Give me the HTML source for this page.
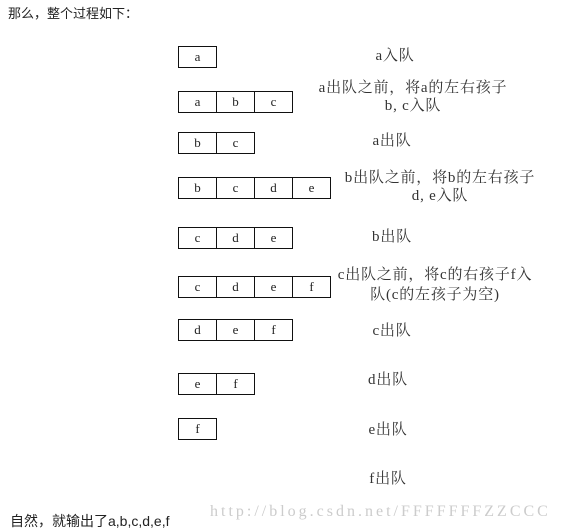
<!DOCTYPE html>
<html><head><meta charset="utf-8"><style>
body{margin:0;width:573px;height:531px;background:#fff;position:relative;overflow:hidden;font-family:"Liberation Serif","Noto Serif CJK SC",serif;color:#222}
.b{position:absolute;height:20px;border:1px solid #111;display:flex}
.b span{width:37px;border-right:1px solid #111;text-align:center;font-size:13px;line-height:20px}
.b span:last-child{border-right:none}
.t{position:absolute;font-size:15px;letter-spacing:0.8px;white-space:nowrap;transform:translateX(-50%);line-height:18px;color:#333}
.s{position:absolute;font-family:"Liberation Sans","Noto Sans CJK SC",sans-serif;font-size:13px;white-space:nowrap;color:#222}
</style></head><body>
<div class="s" style="left:8px;top:3px">那么，整个过程如下：</div>
<div class="b" style="left:178px;top:46px"><span>a</span></div>
<div class="b" style="left:178px;top:91px"><span>a</span><span>b</span><span>c</span></div>
<div class="b" style="left:178px;top:132px"><span>b</span><span>c</span></div>
<div class="b" style="left:178px;top:177px"><span>b</span><span>c</span><span>d</span><span>e</span></div>
<div class="b" style="left:178px;top:227px"><span>c</span><span>d</span><span>e</span></div>
<div class="b" style="left:178px;top:276px"><span>c</span><span>d</span><span>e</span><span>f</span></div>
<div class="b" style="left:178px;top:319px"><span>d</span><span>e</span><span>f</span></div>
<div class="b" style="left:178px;top:373px"><span>e</span><span>f</span></div>
<div class="b" style="left:178px;top:418px"><span>f</span></div>
<div class="t" style="left:395px;top:47px">a入队</div>
<div class="t" style="left:413px;top:79px">a出队之前，将a的左右孩子</div>
<div class="t" style="left:413px;top:97px">b, c入队</div>
<div class="t" style="left:392px;top:132px">a出队</div>
<div class="t" style="left:440px;top:169px">b出队之前，将b的左右孩子</div>
<div class="t" style="left:440px;top:187px">d, e入队</div>
<div class="t" style="left:392px;top:228px">b出队</div>
<div class="t" style="left:435px;top:266px">c出队之前，将c的右孩子f入</div>
<div class="t" style="left:435px;top:286px">队(c的左孩子为空)</div>
<div class="t" style="left:392px;top:322px">c出队</div>
<div class="t" style="left:388px;top:371px">d出队</div>
<div class="t" style="left:388px;top:421px">e出队</div>
<div class="t" style="left:388px;top:470px">f出队</div>
<div style="position:absolute;left:210px;top:503px;font-size:16px;color:#ccc;white-space:nowrap;letter-spacing:3px">http://blog.csdn.net/FFFFFFFZZCCC</div>
<div class="s" style="left:10px;top:511px;font-size:14px">自然，就输出了a,b,c,d,e,f</div>
</body></html>
